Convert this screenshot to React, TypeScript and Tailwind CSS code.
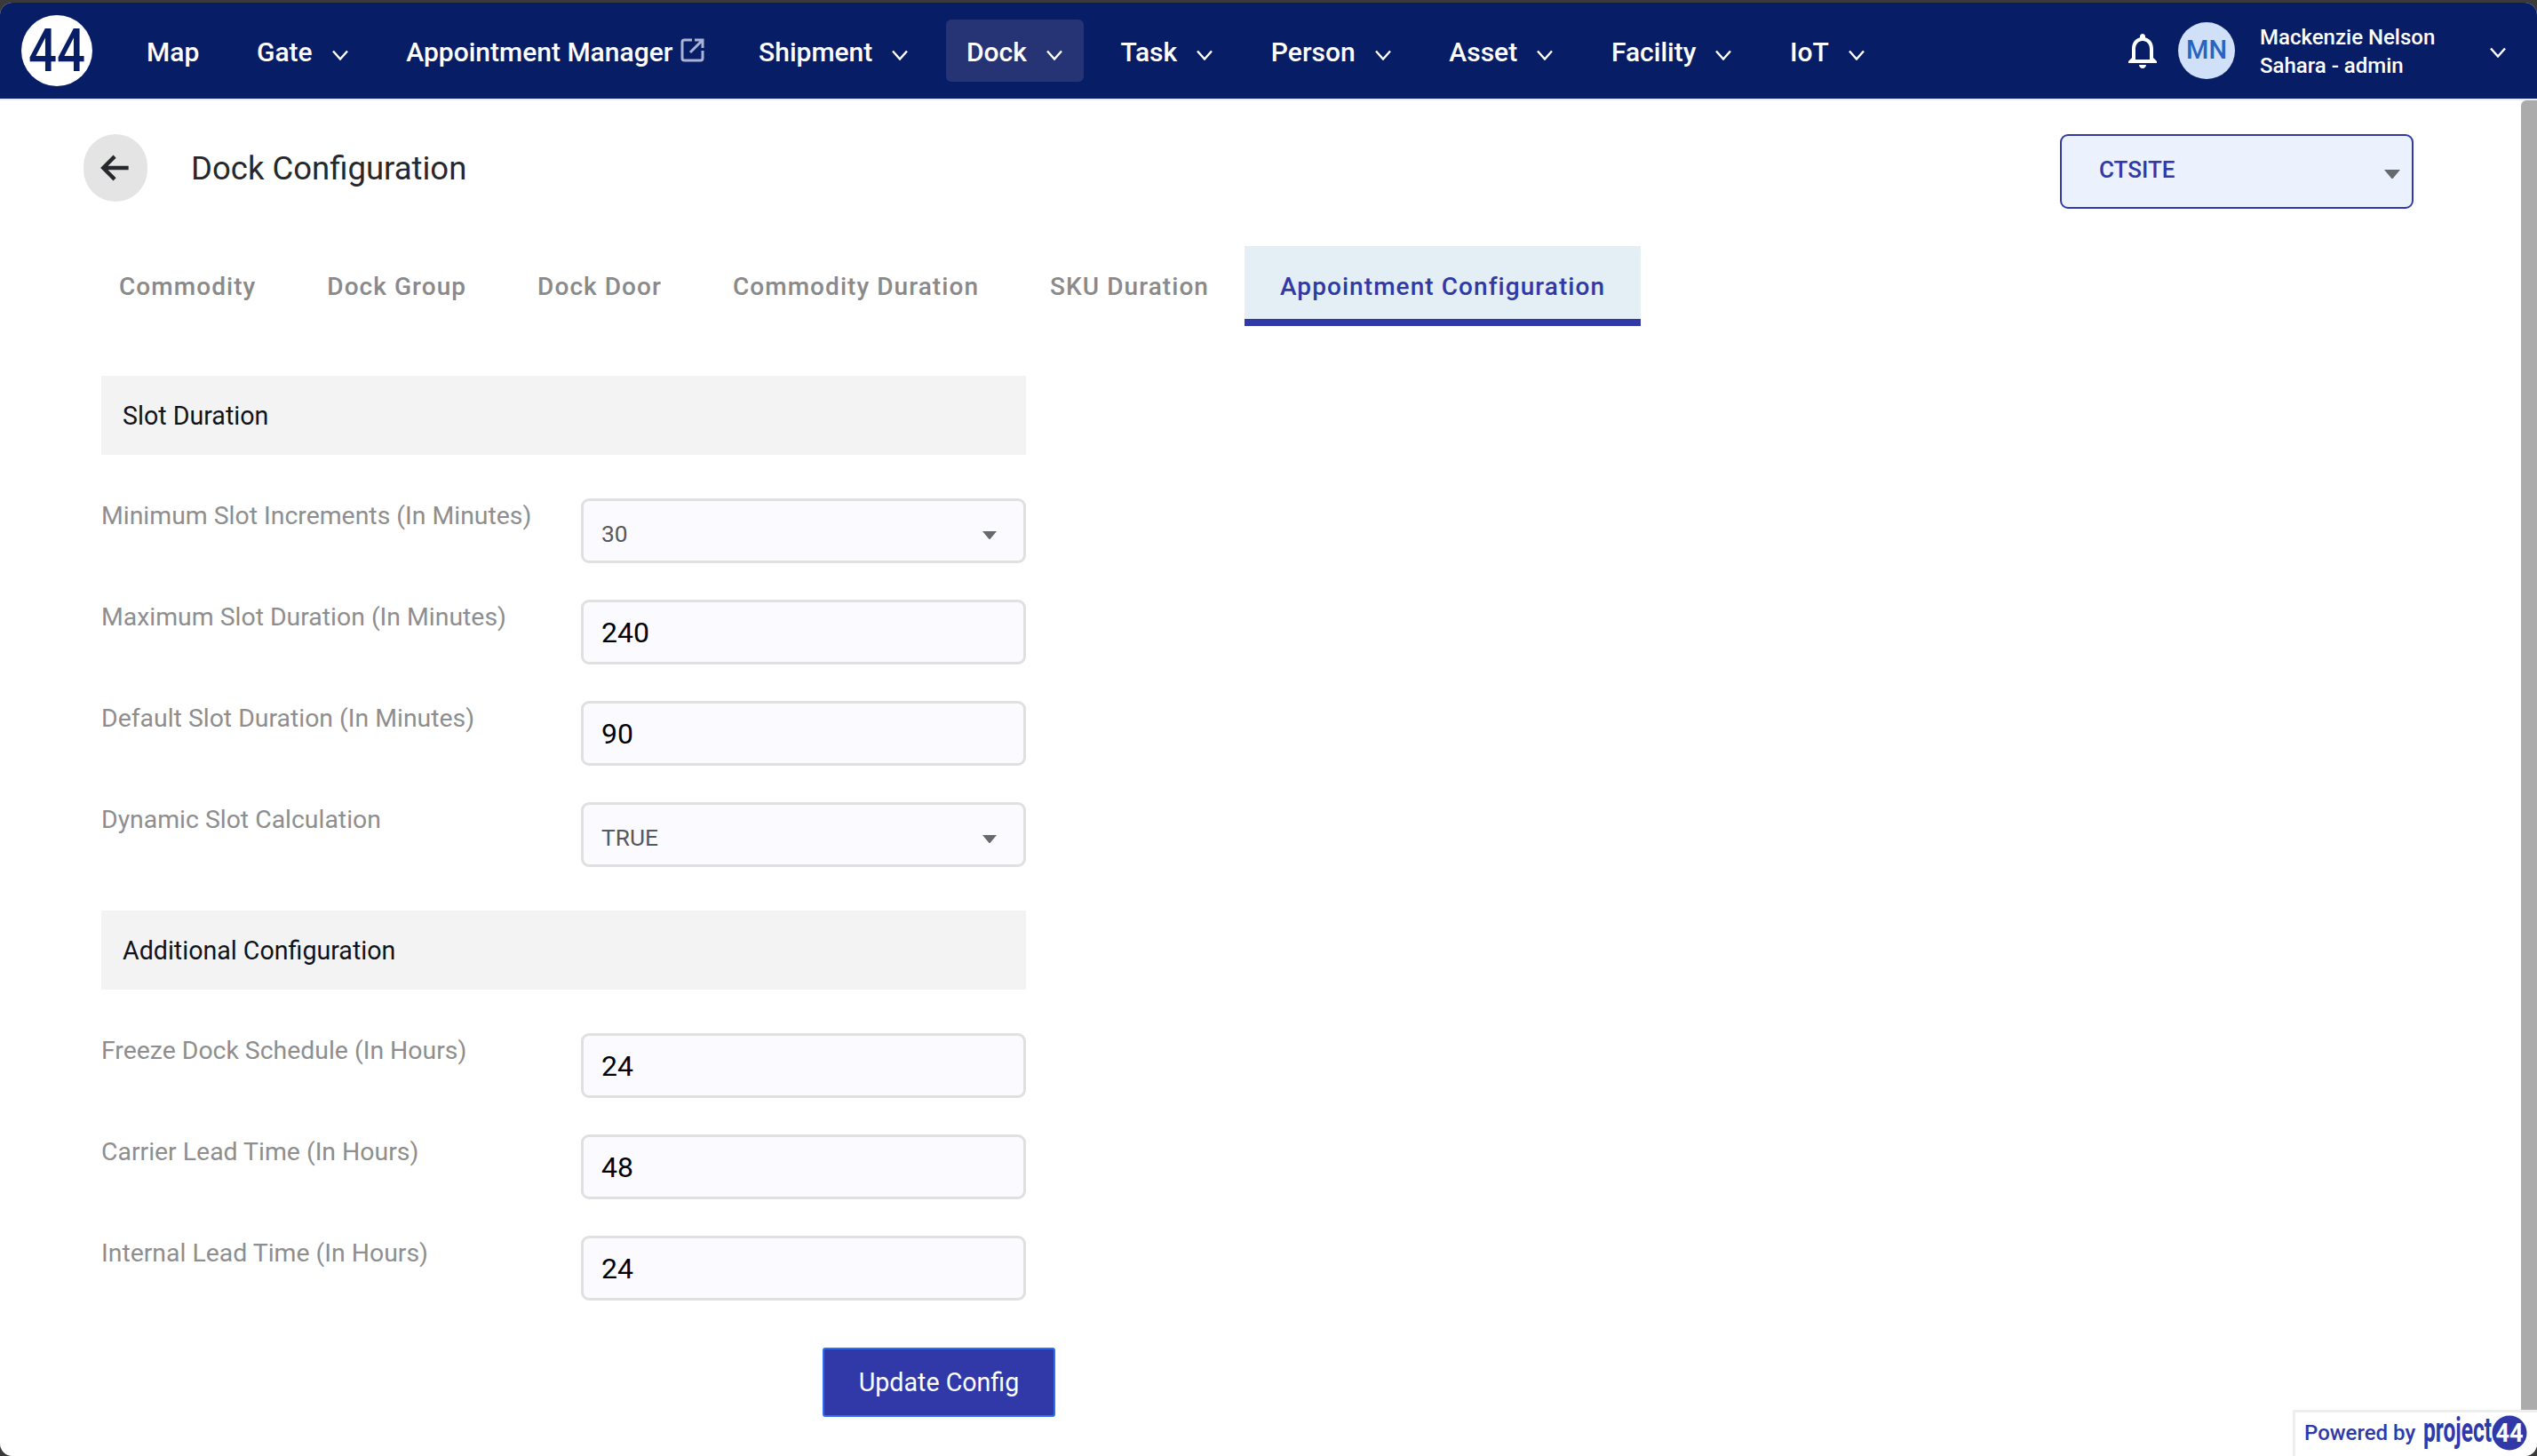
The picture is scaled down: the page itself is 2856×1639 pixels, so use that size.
import React from "react";

const Chevron = ({ className = "" }: { className?: string }) => (
  <svg width="20" height="12" viewBox="0 0 20 12" fill="none" className={className}>
    <path d="M2 1.5 L10 10.5 L18 1.5" stroke="#ffffff" strokeWidth="2.4" />
  </svg>
);

const Caret = ({ w = 15, color = "#66696e" }: { w?: number; color?: string }) => (
  <svg width={w} height={w * 0.6} viewBox="0 0 10 6">
    <path d="M0 0 H10 L5 6 Z" fill={color} />
  </svg>
);

const NavItem = ({ label, active, chevron = true, external }: { label: string; active?: boolean; chevron?: boolean; external?: boolean }) => (
  <div className={`flex h-[70px] items-center rounded-[6px] pl-[23px] ${external ? "pr-[18px]" : "pr-[23px]"} ${active ? "bg-[#263476]" : ""}`}>
    <span className="mt-[3px] text-[30px] leading-[36px] font-medium text-white">{label}</span>
    {external && (
      <svg width="28" height="28" viewBox="0 0 28 28" fill="none" className="ml-[9px] -mt-[2px]">
        <path d="M13 3 H4.5 Q2 3 2 5.5 V23.5 Q2 26 4.5 26 H22.5 Q25 26 25 23.5 V15" stroke="#aab2d6" strokeWidth="3" />
        <path d="M11 17 L24 4 M16 3 H25 V12" stroke="#aab2d6" strokeWidth="3" />
      </svg>
    )}
    {chevron && <Chevron className="ml-[21px] mt-[10px]" />}
  </div>
);

const Tab = ({ label, active }: { label: string; active?: boolean }) => (
  <div
    className={`flex h-[90px] items-center border-b-[8px] px-[40px] pt-[10px] text-[28px] font-medium tracking-[1.06px] ${
      active ? "border-[#3139a8] bg-[#e4eff5] text-[#3139a8]" : "border-transparent text-[#8a8a8a]"
    }`}
  >
    {label}
  </div>
);

const Section = ({ title }: { title: string }) => (
  <div className="flex h-[89px] w-[1041px] items-center bg-[#f3f3f3] px-[24px] pt-[2px] text-[28.6px] text-[#10131a]">{title}</div>
);

const Row = ({ label, value, select, last }: { label: string; value: string; select?: boolean; last?: boolean }) => (
  <div className={`flex w-[1041px] items-start justify-between ${last ? "" : "mb-[41px]"}`}>
    <span className="mt-[2px] text-[28.4px] leading-[36px] text-[#8e8e8e]">{label}</span>
    <div className="flex h-[73px] w-[501px] items-center justify-between rounded-[9px] border-[3.5px] border-[#e0e0e0] bg-[#fbfbff] pl-[20px] pr-[30px]">
      {select ? (
        <>
          <span className="pt-[8px] text-[26.3px] text-[#55585d]">{value}</span>
          <span className="pt-[10px]"><Caret w={16} /></span>
        </>
      ) : (
        <span className="text-[32px] text-black">{value}</span>
      )}
    </div>
  </div>
);

export default function App() {
  return (
    <div className="h-[1639px] w-[2856px] overflow-hidden bg-[#3a3a3a] pt-[3px] font-['Roboto',sans-serif]">
      <div className="relative flex h-[1636px] flex-col overflow-hidden rounded-[14px] bg-white">
        <header className="box-content flex h-[108px] shrink-0 items-center border-b-[2px] border-[#ebebeb] bg-[#071d66] pl-[24px]">
          <div className="flex h-[80px] w-[80px] shrink-0 items-center justify-center rounded-full bg-white">
            <svg width="80" height="80" viewBox="0 0 80 80" className="overflow-visible">
              <text x="40" y="63" textAnchor="middle" fontSize="66" fontWeight="500" fontFamily="Roboto" fill="#071d66" textLength="64" lengthAdjust="spacingAndGlyphs">44</text>
            </svg>
          </div>
          <nav className="ml-[38px] flex items-center gap-[18.7px]">
            <NavItem label="Map" chevron={false} />
            <NavItem label="Gate" />
            <NavItem label="Appointment Manager" chevron={false} external />
            <NavItem label="Shipment" />
            <NavItem label="Dock" active />
            <NavItem label="Task" />
            <NavItem label="Person" />
            <NavItem label="Asset" />
            <NavItem label="Facility" />
            <NavItem label="IoT" />
          </nav>
          <div className="ml-auto flex items-center pr-[34px]">
            <svg width="48" height="48" viewBox="0 0 24 24" fill="#ffffff">
              <path d="M12 22c1.1 0 2-.9 2-2h-4c0 1.1.9 2 2 2zm6-6v-5c0-3.07-1.63-5.64-4.5-6.32V4c0-.83-.67-1.5-1.5-1.5s-1.5.67-1.5 1.5v.68C7.64 5.36 6 7.92 6 11v5l-2 2v1h16v-1l-2-2zm-2 1H8v-6c0-2.48 1.51-4.5 4-4.5s4 2.02 4 4.5v6z" />
            </svg>
            <div className="ml-[16px] flex h-[64px] w-[64px] items-center justify-center rounded-full bg-[#cfe0f8] text-[29px] font-medium text-[#2a63c0]">MN</div>
            <div className="ml-[28px] mt-[2px] w-[258px] text-[24px] leading-[32px] font-medium text-white">
              <div>Mackenzie Nelson</div>
              <div>Sahara - admin</div>
            </div>
            <Chevron className="mt-[4px]" />
          </div>
        </header>

        <div className="flex min-h-0 flex-1">
          <main className="min-w-0 flex-1 pl-[94px] pt-[38px]">
            <div className="flex items-start pr-[121px]">
              <button className="flex h-[76px] w-[72px] items-center justify-center rounded-full bg-[#e4e4e4]">
                <svg width="44" height="44" viewBox="0 0 24 24" fill="none">
                  <path d="M20 12 H5 M11.5 5 L4.5 12 L11.5 19" stroke="#26282c" strokeWidth="2.4" />
                </svg>
              </button>
              <h1 className="ml-[49px] flex h-[76px] items-center pt-[2px] text-[36.5px] font-normal text-[#26282c]">Dock Configuration</h1>
              <div className="ml-auto flex h-[84px] w-[398px] items-center justify-between rounded-[9px] border-[2.5px] border-[#3139a8] bg-[#ebf2fd] pl-[42px] pr-[13px]">
                <span className="-mt-[4px] text-[26px] font-medium text-[#3139a8]">CTSITE</span>
                <span className="mt-[6px]"><Caret w={18} /></span>
              </div>
            </div>

            <div className="mt-[42px] flex">
              <Tab label="Commodity" />
              <Tab label="Dock Group" />
              <Tab label="Dock Door" />
              <Tab label="Commodity Duration" />
              <Tab label="SKU Duration" />
              <Tab label="Appointment Configuration" active />
            </div>

            <div className="ml-[20px] mt-[56px] w-[1074px]">
              <Section title="Slot Duration" />
              <div className="mt-[49px]">
                <Row label="Minimum Slot Increments (In Minutes)" value="30" select />
                <Row label="Maximum Slot Duration (In Minutes)" value="240" />
                <Row label="Default Slot Duration (In Minutes)" value="90" />
                <Row label="Dynamic Slot Calculation" value="TRUE" select last />
              </div>
              <div className="mt-[49px]">
                <Section title="Additional Configuration" />
              </div>
              <div className="mt-[49px]">
                <Row label="Freeze Dock Schedule (In Hours)" value="24" />
                <Row label="Carrier Lead Time (In Hours)" value="48" />
                <Row label="Internal Lead Time (In Hours)" value="24" last />
              </div>
              <div className="mt-[53px] flex justify-end">
                <button className="h-[78px] w-[262px] rounded-[3px] border-[2.5px] border-[#2e6ff2] bg-[#3139a8] text-[28.6px] text-white">Update Config</button>
              </div>
            </div>
          </main>
          <div className="w-[18px] shrink-0 rounded-tl-[6px] bg-[#ababab]" />
        </div>

        <div className="absolute bottom-0 right-0 flex h-[52px] w-[275px] items-center rounded-tl-[2px] border-[3px] border-r-0 border-b-0 border-[#eeeeee] bg-white pl-[10px]">
          <span className="-mt-[4px] shrink-0 whitespace-nowrap text-[24px] font-medium text-[#3139a8]">Powered by</span>
          <svg width="120" height="46" viewBox="0 0 120 46" className="ml-[9px] shrink-0 overflow-visible">
            <text x="0" y="30.5" fontSize="38" fontWeight="700" fontFamily="Roboto" fill="#3139a8" textLength="77" lengthAdjust="spacingAndGlyphs">project</text>
            <circle cx="97" cy="21" r="19.5" fill="#3139a8" />
            <text x="97" y="31" textAnchor="middle" fontSize="29" fontWeight="700" fontFamily="Roboto" fill="#ffffff" textLength="31" lengthAdjust="spacingAndGlyphs">44</text>
          </svg>
        </div>
      </div>
    </div>
  );
}
